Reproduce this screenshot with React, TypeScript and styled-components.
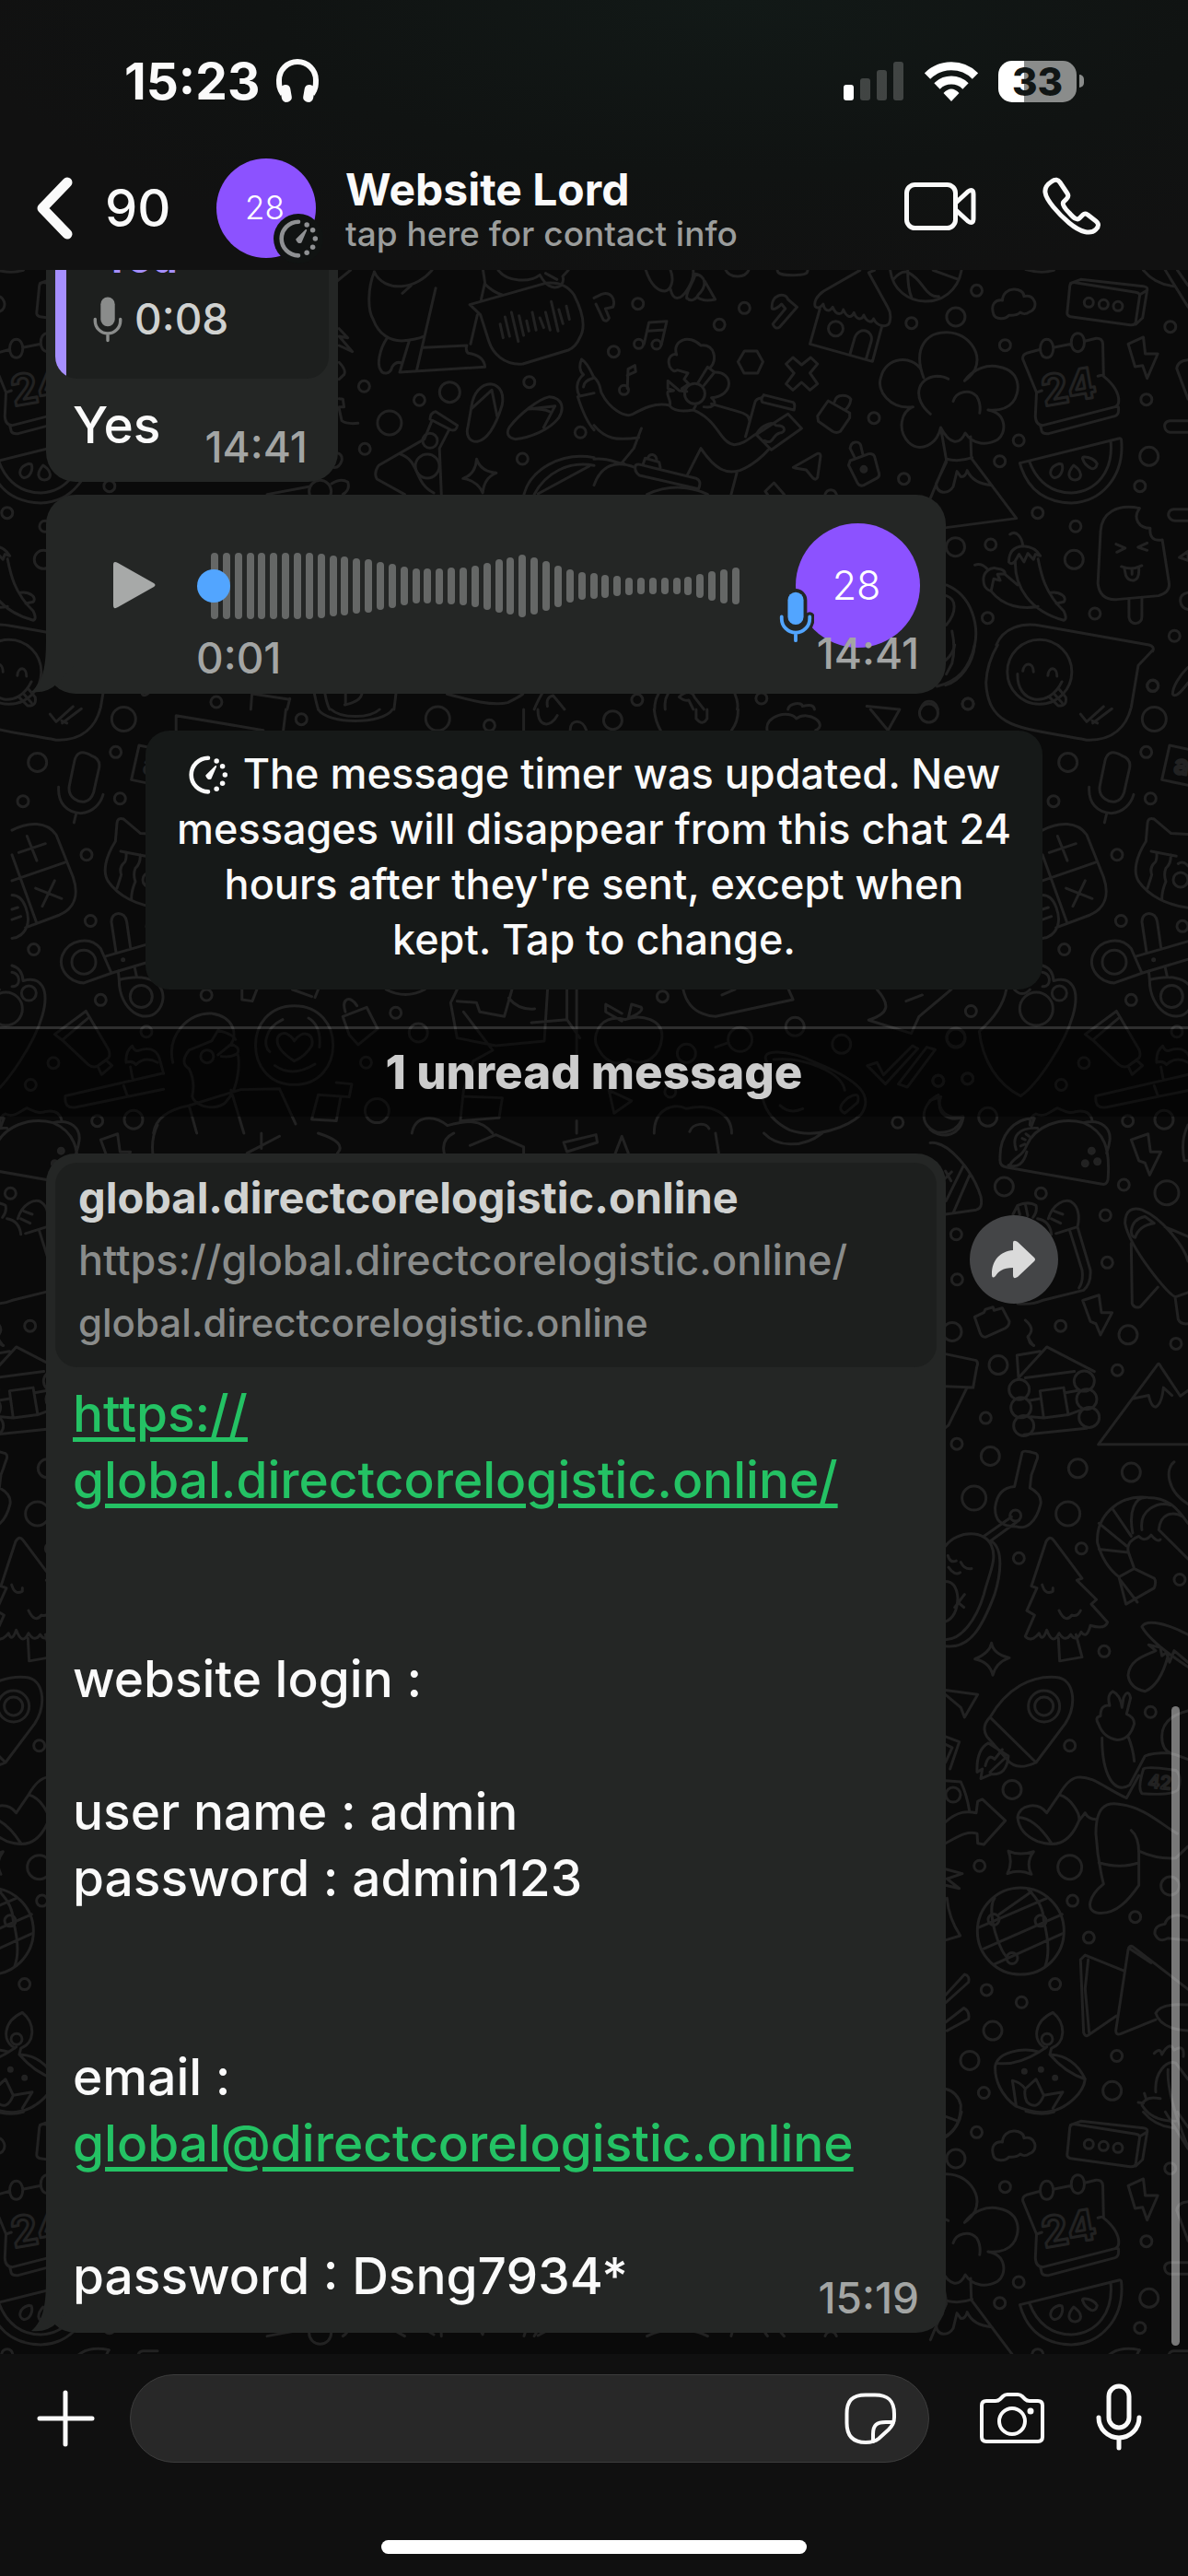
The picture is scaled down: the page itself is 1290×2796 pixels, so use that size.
import styled, { createGlobalStyle } from "styled-components";

const GlobalStyle = createGlobalStyle`
  * {
    box-sizing: border-box;
  }
  body {
    margin: 0;
    background: #0a0a0a;
    color: #fafafa;
    font-family: Inter, "Liberation Sans", sans-serif;
    font-weight: 500;
  }
  button {
    display: flex;
    flex: none;
    padding: 0;
    border: none;
    background: none;
    color: inherit;
    font: inherit;
  }
  svg {
    display: block;
    flex: none;
  }
`;

const Screen = styled.div`
  display: flex;
  flex-direction: column;
  height: 100vh;
`;

/* ---------- header ---------- */

const Header = styled.header`
  flex: none;
  height: 293px;
  background: radial-gradient(ellipse at 62% 0, #121917 0, #101312 45%, #111111 75%);
`;

const StatusBar = styled.div`
  display: flex;
  align-items: center;
  justify-content: space-between;
  height: 172px;
  padding: 4px 113px 0 135px;
`;

const StatusGroup = styled.div<{ $gap: number }>`
  display: flex;
  align-items: center;
  gap: ${(p) => p.$gap}px;
`;

const Clock = styled.span`
  font-size: 55px;
  font-weight: 700;
`;

const Battery = styled.div`
  display: flex;
  align-items: center;
  gap: 3px;

  &::after {
    content: "";
    width: 5px;
    height: 14px;
    border-radius: 0 7px 7px 0;
    background: #8a8c8b;
  }
`;

const BatteryBody = styled.span`
  display: flex;
  align-items: center;
  justify-content: center;
  width: 85px;
  height: 45px;
  border-radius: 15px;
  background: linear-gradient(90deg, #fff 33%, #8a8c8b 33%);
  color: #111615;
  font-size: 42px;
  font-weight: 800;
`;

const NavBar = styled.div`
  display: flex;
  align-items: center;
  height: 108px;
  padding: 0 93px 0 37px;
`;

const BackButton = styled.button`
  align-items: center;
  gap: 33px;
  width: 198px;
  font-size: 56px;
`;

const Contact = styled.button`
  flex: 1;
  align-items: center;
  gap: 32px;
  text-align: left;
`;

const Avatar = styled.span<{ $size: number; $text: number }>`
  position: relative;
  display: flex;
  flex: none;
  align-items: center;
  justify-content: center;
  width: ${(p) => p.$size}px;
  height: ${(p) => p.$size}px;
  padding: 0 3px 2px 0;
  border-radius: 50%;
  background: #8c52ff;
  color: #fff;
  font-size: ${(p) => p.$text}px;
  font-weight: 300;
`;

const TimerBadge = styled.span`
  position: absolute;
  right: -8px;
  bottom: -6px;
  padding: 5px;
  border-radius: 50%;
  background: #101312;
  color: #8f9193;
`;

const ContactText = styled.span`
  display: flex;
  flex-direction: column;
  padding-top: 3px;
`;

const ContactName = styled.span`
  font-size: 48px;
  font-weight: 700;
  line-height: 52px;
`;

const ContactHint = styled.span`
  color: #9b9d9c;
  font-size: 37px;
  line-height: 44px;
`;

const NavActions = styled.div`
  display: flex;
  align-items: center;
  gap: 68px;
  padding-bottom: 4px;
`;

/* ---------- chat ---------- */

const Chat = styled.main`
  position: relative;
  display: flex;
  flex: 1;
  flex-direction: column;
  justify-content: flex-end;
  min-height: 0;
  padding-bottom: 23px;
  overflow: hidden;
`;

const WallpaperSvg = styled.svg`
  position: absolute;
  inset: 0;
  width: 100%;
  height: 100%;
  fill: none;
  stroke: #222222;
  stroke-width: 3;
  stroke-linecap: round;
  stroke-linejoin: round;

  path,
  ellipse {
    vector-effect: non-scaling-stroke;
  }
`;

const ScrollThumb = styled.div`
  position: absolute;
  right: 9px;
  bottom: 9px;
  width: 9px;
  height: 694px;
  border-radius: 5px;
  background: rgba(255, 255, 255, 0.45);
`;

const MessageRow = styled.div<{ $gap: number }>`
  position: relative;
  display: flex;
  flex: none;
  align-items: flex-start;
  gap: 26px;
  margin-top: ${(p) => p.$gap}px;
  padding: 0 141px 0 50px;
`;

const Bubble = styled.article<{ $wide?: boolean }>`
  position: relative;
  flex: ${(p) => (p.$wide ? "1" : "none")};
  padding: 10px;
  border-radius: 32px;
  background: #242625;
`;

const TailSvg = styled.svg`
  position: absolute;
  left: -16px;
  bottom: 0;
`;

const Card = styled.div`
  display: flex;
  overflow: hidden;
  border-radius: 24px;
  background: #1d1f1e;
`;

const QuoteBar = styled.span`
  width: 12px;
  background: #a68fff;
`;

const QuoteText = styled.div`
  display: flex;
  flex-direction: column;
  padding: 4px 27px 31px;
`;

const QuoteAuthor = styled.span`
  padding-left: 12px;
  color: #a68fff;
  font-size: 44px;
  font-weight: 700;
  line-height: 64px;
`;

const QuoteLine = styled.span`
  display: flex;
  align-items: center;
  gap: 11px;
  color: #d0d2d1;
  font-size: 46px;
  line-height: 68px;
`;

const ReplyLine = styled.div`
  display: flex;
  justify-content: space-between;
  gap: 48px;
  padding: 14px 23px 16px 19px;
`;

const ReplyText = styled.span`
  font-size: 55px;
  line-height: 72px;
`;

const Body = styled.p`
  margin: 0;
  padding: 14px 19px 16px;
  font-size: 55px;
  line-height: 72px;
  white-space: pre-line;

  a {
    color: #24c264;
    text-decoration-thickness: 5px;
    text-underline-offset: 6px;
  }
`;

const Time = styled.time`
  color: #a3a5a4;
  font-size: 46px;
  line-height: 48px;
`;

const ReplyTime = styled(Time)`
  align-self: flex-end;
  margin-bottom: -12px;
`;

const CornerTime = styled(Time)<{ $bottom: number }>`
  position: absolute;
  right: 29px;
  bottom: ${(p) => p.$bottom}px;
`;

const Voice = styled.div`
  display: flex;
  height: 196px;
  padding: 21px 18px 0 63px;
`;

const PlayButton = styled.button`
  align-self: flex-start;
  margin-top: 41px;
  color: #a7a9a8;
`;

const Track = styled.div`
  display: flex;
  flex: 1;
  flex-direction: column;
  padding: 32px 61px 0 60px;
`;

const Wave = styled.div`
  position: relative;
  display: flex;
  align-items: center;
  justify-content: space-between;
  height: 72px;
`;

const WaveBar = styled.span`
  width: 8px;
  border-radius: 4px;
  background: #656766;
`;

const Knob = styled.span`
  position: absolute;
  left: -15px;
  width: 36px;
  height: 36px;
  border-radius: 50%;
  background: #52a5ff;
`;

const Elapsed = styled(Time)`
  margin: 18px 0 0 -16px;
`;

const VoiceMic = styled.span`
  position: absolute;
  left: -20px;
  bottom: 4px;
`;

const SideSpace = styled.div`
  flex: none;
  width: 96px;
`;

const SystemNotice = styled.button`
  position: relative;
  display: block;
  margin: 40px 158px;
  padding: 17px 24px 24px;
  border-radius: 26px;
  background: #161918;
  font-size: 45px;
  line-height: 60px;
  text-align: center;

  svg {
    display: inline-block;
    margin-right: 16px;
    vertical-align: -7px;
  }
`;

const UnreadBand = styled.div`
  position: relative;
  flex: none;
  height: 98px;
  border-top: 3px solid rgba(255, 255, 255, 0.15);
  background: rgba(0, 0, 0, 0.5);
  background-clip: padding-box;
  color: #cdcdcd;
  font-size: 51px;
  font-weight: 800;
  line-height: 94px;
  text-align: center;
`;

const Preview = styled(Card)`
  flex-direction: column;
  padding: 4px 25px 14px;
  line-height: 68px;
`;

const PreviewTitle = styled.span`
  color: #d0d2d1;
  font-size: 47px;
  font-weight: 700;
`;

const PreviewText = styled.span<{ $size: number }>`
  color: #8a8c8b;
  font-size: ${(p) => p.$size}px;
`;

const ForwardButton = styled.button`
  align-items: center;
  justify-content: center;
  width: 96px;
  height: 96px;
  margin-top: 67px;
  border-radius: 50%;
  background: #444547;
  color: #dadada;
`;

/* ---------- footer ---------- */

const Footer = styled.footer`
  display: flex;
  flex: none;
  flex-direction: column;
  align-items: center;
  justify-content: space-between;
  height: 241px;
  padding: 22px 0 24px;
  background: #101010;
`;

const Composer = styled.form`
  display: flex;
  align-items: center;
  width: 100%;
  padding: 0 50px 0 39px;
`;

const Field = styled.div`
  display: flex;
  flex: 1;
  align-items: center;
  min-width: 0;
  height: 96px;
  margin: 0 53px 0 37px;
  padding: 0 33px 0 40px;
  border: 1px solid #3c3c3c;
  border-radius: 48px;
  background: #282828;
`;

const FieldInput = styled.input`
  flex: 1;
  min-width: 0;
  border: none;
  outline: none;
  background: none;
  color: #fafafa;
  font: inherit;
  font-size: 55px;
`;

const MicButton = styled.button`
  margin-left: 54px;
  padding-bottom: 4px;
`;

const HomeIndicator = styled.div`
  width: 462px;
  height: 15px;
  border-radius: 8px;
  background: #fff;
`;

/* ---------- icons ---------- */

const line = {
  fill: "none",
  stroke: "currentColor",
  strokeWidth: 5,
  strokeLinecap: "round",
  strokeLinejoin: "round",
} as const;

const HeadphonesIcon = () => (
  <svg width="48" height="48" viewBox="0 0 48 48" fill="currentColor">
    <path d="M8 38C4 32 4 28 4 23a20 20 0 0 1 40 0c0 5 0 9-4 15" fill="none" stroke="currentColor" strokeWidth="6" />
    <rect x="6" y="28" width="11" height="19" rx="5" transform="rotate(-10 11 37)" />
    <rect x="31" y="28" width="11" height="19" rx="5" transform="rotate(10 37 37)" />
  </svg>
);

const SignalIcon = () => (
  <svg width="66" height="44" viewBox="0 0 66 44" fill="#fff">
    <rect x="0" y="26" width="11" height="17" rx="3" />
    <g opacity="0.2">
      <rect x="18" y="19" width="11" height="24" rx="3" />
      <rect x="36" y="10" width="11" height="33" rx="3" />
      <rect x="54" y="1" width="11" height="42" rx="3" />
    </g>
  </svg>
);

const WifiIcon = () => (
  <svg width="58" height="43" viewBox="0 0 58 43" fill="none" stroke="#fff" strokeWidth="9">
    <path d="M3 15.500a37 37 0 0 1 52 0" />
    <path d="M13.500 26.500a22 22 0 0 1 31 0" />
    <path d="M20.500 34q8.500-9 17 0l-8.500 9z" fill="#fff" stroke="none" />
  </svg>
);

const BackIcon = () => (
  <svg width="44" height="72" viewBox="0 0 44 72" {...line} strokeWidth={11}>
    <path d="M36 8L9 36l27 28" />
  </svg>
);

const TimerIcon = ({ size }: { size: number }) => (
  <svg width={size} height={size} viewBox="0 0 48 48" fill="currentColor">
    <path d="M24 4a20 20 0 0 0 0 40" {...line} />
    <circle cx="34" cy="7.500" r="3" />
    <circle cx="41" cy="14" r="3" />
    <circle cx="44" cy="24" r="3" />
    <circle cx="41" cy="34" r="3" />
    <circle cx="34" cy="40.500" r="3" />
    <path d="M22 25L33 14l-6 14q-3 2-5-3z" stroke="currentColor" strokeWidth="2" strokeLinejoin="round" />
  </svg>
);

const VideoIcon = () => (
  <svg width="82" height="56" viewBox="0 0 82 56" {...line}>
    <rect x="4.500" y="4.500" width="53" height="47" rx="9" />
    <path d="M58 24L71 12q6-4 6 3v26q0 7-6 3L58 32" />
  </svg>
);

const PhoneIcon = () => (
  <svg width="67" height="66" viewBox="0 0 67 66" {...line}>
    <path d="M12 6c4-3 7-2 9 1l8 12q2 3-1 6l-3 3c-2 2 0 6 6 12c6 7 9 8 11 6l4-4q2-2 5 0l9 7q5 4 0 9c-6 6-17 3-29-7C19 41 6 26 5 18Q4 11 12 6z" />
  </svg>
);

const MicSolidIcon = ({ color, width, outline }: { color: string; width: number; outline?: string }) => (
  <svg width={width} height={(width * 54) / 36} viewBox="-3 -3 42 63" fill="none" strokeLinecap="round">
    {outline && (
      <>
        <rect x="9" y="1" width="18" height="38" rx="9" fill={outline} stroke={outline} strokeWidth="8" />
        <path d="M2 29v2a16 16 0 0 0 32 0v-2" stroke={outline} strokeWidth="11" />
      </>
    )}
    <rect x="9" y="1" width="18" height="37" rx="9" fill={color} />
    <path d="M2 29v2a16 16 0 0 0 32 0v-2M18 47v9" stroke={color} strokeWidth="4" />
  </svg>
);

const PlayIcon = () => (
  <svg width="46" height="52" viewBox="0 0 46 52" fill="currentColor">
    <path d="M0 4Q0-1 5 2L44 24q3 2 0 4L5 50q-5 3-5-2z" />
  </svg>
);

const ForwardIcon = () => (
  <svg width="48" height="42" viewBox="0 0 48 42" fill="currentColor">
    <path d="M23 3q0-4 5-1l18 17q2 2 0 4L28 40q-5 3-5-2v-8C12 30 7 34 4 39q-4 4-4-2C0 22 9 12 23 11z" />
  </svg>
);

const PlusIcon = () => (
  <svg width="65" height="64" viewBox="0 0 65 64" {...line}>
    <path d="M4 32h57M32 4v56" />
  </svg>
);

const StickerIcon = () => (
  <svg width="59" height="59" viewBox="0 0 59 59" {...line} strokeWidth={4}>
    <path d="M55 28v-4C55 9 48 3.500 34 3.500H24C9 3.500 3.500 10 3.500 24v10C3.500 48 10 55 24 55q9 0 14-4l11-10q6-6 6-13z" />
    <path d="M32 54v-8c0-10 4-13 14-13h8" />
  </svg>
);

const CameraIcon = () => (
  <svg width="74" height="58" viewBox="0 0 74 58" {...line} strokeWidth={4}>
    <path d="M9 10h10q3 0 5-2l3-3q2-2 5-2h11q3 0 5 2l3 3q2 2 5 2h9q5 0 5 5v34q0 5-5 5H9q-5 0-5-5V15q0-5 5-5z" />
    <circle cx="37" cy="32" r="14" />
    <circle cx="57" cy="21" r="3.500" fill="currentColor" stroke="none" />
  </svg>
);

const MicIcon = () => (
  <svg width="50" height="74" viewBox="0 0 50 74" {...line}>
    <rect x="14" y="4" width="22" height="45" rx="11" />
    <path d="M3 38a22 22 0 0 0 44 0M25 61v10" />
  </svg>
);

const Tail = () => (
  <TailSvg width="46" height="60" viewBox="0 0 46 60" fill="#242625">
    <path d="M16 0C16 28 14 46 0 58q17 2 28-9l18-19V0z" />
  </TailSvg>
);

/* ---------- wallpaper ---------- */

type Dot = [number, number, number];

interface Sketch {
  x: number;
  y: number;
  sx: number;
  sy: number;
  d: string;
  small: number[][];
  rings: Dot[];
  solid?: Dot[];
}

// Each sketch keeps its own drawing grid; x, y, sx, sy map it onto the wallpaper.
const sketches: Sketch[] = [
  {
    x: 0,
    y: 270,
    sx: 0.4114,
    sy: 0.3333,
    d:
      "M988 75C970 130 970 200 985 230C1000 280 1030 300 1060 300Q1095 298 1120 285M988 75C1000 110 1030 125 1060 122C1090 120 1120 100 1140 70M1062 145L1085 120M1150 128L1100 395M1080 300L1055 402L1280 385C1278 360 1265 345 1235 340Q1228 330 1232 315L1118 322M1022 290C1000 330 995 380 1005 395C1010 410 1030 410 1035 385Q1045 365 1060 372M1242 310L1260 215M1270 165L1280 110L1275 70M1280 115Q1300 140 1325 150M890 105L925 70" +
      "M1240 182L1440 112Q1490 105 1515 150C1540 210 1545 260 1530 290Q1520 320 1500 330L1380 375C1330 380 1300 340 1290 300L1268 215ZM1320 245L1328 290M1333 222L1345 285M1350 207L1368 302M1370 218L1382 282M1390 235L1396 268M1405 207L1415 265M1425 225L1435 257M1440 207L1452 265M1455 172L1473 268M1475 198L1486 244M1495 187L1503 230" +
      "M1315 70C1340 110 1400 110 1425 85C1440 120 1460 135 1480 120Q1490 105 1485 90L1500 70M1440 80L1470 100M895 260L918 290L895 285L930 335L895 315M895 370Q915 395 908 410L895 425M895 488L905 490L908 515H895M895 520L902 560Q915 572 945 568M890 665Q905 670 902 690Q895 715 880 712" +
      "M1245 510C1250 470 1270 440 1295 440C1325 445 1330 480 1325 510C1310 570 1290 620 1260 628C1235 630 1230 600 1235 580ZM1245 520L1298 460L1312 545M1345 580C1370 540 1420 490 1450 482C1485 485 1490 520 1475 550C1450 590 1400 615 1360 620C1340 615 1335 600 1345 580M1395 522L1465 512L1435 582M1395 522Q1430 520 1450 530" +
      "M1150 530Q1135 535 1135 555L1190 590Q1205 595 1207 575ZM1140 560L1120 620L1000 705Q985 730 995 750L1068 800M1185 590L1160 650L1165 800M1055 668C1110 690 1090 760 1145 795M1258 685Q1268 725 1310 730Q1278 745 1274 795Q1260 755 1222 748Q1255 735 1258 685Z" +
      "M1383 800C1400 720 1480 660 1568 680M1410 800C1440 730 1500 690 1568 706M1420 798L1555 708M1535 360C1550 370 1560 400 1568 420M1535 360C1528 380 1530 400 1540 410C1520 430 1520 460 1530 480L1568 470M1568 420Q1540 430 1540 450M1525 482Q1545 560 1568 590M705 800L815 775M875 765Q900 745 918 760Q925 785 905 800" +
      "M665 1450L662 1500M765 1465L758 1500M670 1450L765 1468M830 1450Q835 1480 840 1500M858 1450Q862 1480 870 1500M912 1485V1450M1045 1450L1040 1500M910 1485Q950 1475 955 1450M1180 1450C1240 1470 1300 1490 1340 1478Q1370 1460 1380 1450M1410 1500Q1420 1470 1430 1450M1445 1490Q1440 1460 1460 1455L1490 1500",
    small: [[961, 448], [1107, 493], [1397, 434], [963, 652], [1379, 684], [1532, 598], [571, 1476]],
    rings: [[1187, 467, 11], [1028, 567, 13], [1135, 625, 8], [1128, 708, 13], [845, 790, 12]],
  },
  {
    x: 645,
    y: 270,
    sx: 0.4114,
    sy: 0.3333,
    d:
      "M137 70C150 120 170 138 187 138C205 134 212 100 202 70M262 70C265 110 235 160 222 160C212 162 205 150 202 132M245 160C255 175 270 165 275 150C300 120 295 90 268 82C262 110 240 145 245 162M292 105L320 165C300 170 285 170 272 158M348 70C358 95 398 98 408 70M484 70C484 84 500 86 525 86C555 86 565 82 564 68" +
      "M702 70L606 138C586 155 580 175 584 188C590 196 600 190 605 180C608 200 620 210 630 190C640 220 655 215 658 198C668 226 680 226 686 208C694 236 708 230 712 216C722 244 735 240 738 228C748 256 775 256 780 240C786 215 780 200 775 190L725 78L740 70M596 196L570 310L735 367L760 252M676 342L688 290C700 250 738 266 732 300L718 360" +
      "M782 70C795 200 950 210 970 70M828 70Q828 130 838 158M790 100Q810 70 828 76Q850 90 870 125Q890 160 910 155M895 70L962 100M1055 215C1045 180 1060 165 1078 168C1080 120 1135 125 1135 155C1165 145 1175 195 1150 205C1140 215 1130 212 1125 207C1115 220 1105 215 1095 217C1085 232 1060 230 1055 215Z" +
      "M1256 120Q1258 108 1270 110L1430 142Q1443 145 1440 155L1430 238Q1428 250 1415 248L1262 222Q1248 220 1249 208ZM1258 112L1285 100L1450 122Q1462 124 1460 135L1448 225L1430 246M1440 150L1460 135M1450 70Q1480 115 1530 122M1508 70L1568 190M1540 70L1568 120M1140 68Q1180 82 1214 70" +
      "M132 310L145 240L192 236L178 312M142 268L186 264M88 455L90 392L108 380L110 400L88 412M470 195C465 150 505 138 512 165L536 190L490 255Q478 265 472 245L505 195L495 180C488 190 475 200 470 195ZM0 160L20 148C45 138 58 165 50 190L30 195L40 225Q35 240 25 232L5 180M380 368L397 333L430 333L446 368L432 405L396 405Z" +
      "M507 375L525 354L548 378L572 354L590 375L570 405L590 440L570 460L548 435L525 460L507 440L528 405ZM200 385C190 350 210 340 218 345C205 300 250 275 282 315C320 310 325 365 308 385M200 385Q210 405 220 395L248 405L238 425L250 440L232 455L245 465L225 462L195 430V455L210 462L195 465C190 480 205 490 200 512Q215 535 262 525L268 512M275 435L300 385L318 402L290 445M318 402C370 400 370 480 310 485C330 505 310 520 290 515" +
      "M0 418C20 440 15 460 20 470C40 520 80 550 100 540C130 520 160 500 200 510M262 525C330 560 330 630 370 638C400 635 410 615 432 600M310 505L380 530Q412 540 410 560M0 575C30 620 60 625 118 615M125 585L105 650L75 695M245 740L282 650C320 720 350 735 385 722C420 705 450 670 460 655M378 725L362 800M400 612L425 500Q428 488 440 486M448 476L525 500Q532 505 528 525L445 500Q438 490 448 476M428 605L512 538L548 585L468 655ZM428 605C440 575 470 560 480 575C510 575 505 600 490 600C470 605 475 640 450 625" +
      "M0 685C40 680 60 700 80 700M0 770C20 700 60 690 108 712M110 705Q115 700 125 704L270 748Q285 755 276 782L120 738Q105 725 110 705M130 700L135 682L172 695L175 712M142 682C145 665 165 665 166 692M140 800C200 765 260 775 300 800M458 800L452 790L475 762L502 800M610 800C615 780 635 780 640 800" +
      "M590 545L618 495L675 535L675 550L650 595Q640 602 630 595L592 562ZM635 498C640 470 670 475 678 490Q675 515 662 525M526 712L590 667Q598 665 598 675L590 745Q585 755 578 747L560 720L530 714ZM676 690L725 668Q735 665 740 675L752 730Q755 742 745 748L712 770Q700 775 695 762L672 705ZM688 680L676 650C678 625 700 625 704 640L710 672" +
      "M870 420C840 320 880 270 932 272C990 275 1025 340 1005 395Q995 415 978 430C1000 390 1040 375 1070 385C1130 400 1125 470 1105 500Q1085 530 1040 525C1090 535 1090 600 1065 622C1040 640 1000 640 980 600C965 640 940 640 915 582C905 640 860 665 830 630C800 590 810 530 842 515C780 525 745 460 757 420C770 350 840 345 864 395M888 538C840 490 850 420 905 415Q925 416 935 424M948 497C955 465 990 455 1010 480Q1022 505 1018 535M915 582L930 688L888 812M994 612L996 682L1115 878L930 908M930 685Q965 695 998 680M930 695L903 765C905 800 935 800 948 775L958 725L968 742Q980 745 985 722Q1000 765 1050 770" +
      "M1178 328L1142 340Q1130 345 1132 360L1168 468L1165 545Q1166 575 1185 575L1375 515Q1385 510 1385 495C1385 460 1360 430 1345 415L1343 310Q1342 290 1325 292L1298 300M1212 322L1260 310M1178 575L1182 595Q1186 604 1200 602L1375 545Q1387 540 1384 515M1168 468L1182 462M1330 415L1345 410M1195 295C1172 295 1172 355 1195 355C1218 355 1218 295 1195 295M1277 275C1254 275 1254 335 1277 335C1300 335 1300 275 1277 275M1410 310L1450 288L1455 342L1488 342L1460 422L1448 380L1428 384Z" +
      "M1124 698L1385 618Q1392 616 1392 625C1400 740 1340 825 1260 828C1180 825 1140 770 1124 698M1150 695C1170 760 1210 795 1260 795C1330 790 1370 720 1364 630M1228 700C1200 710 1200 740 1215 746C1232 745 1240 720 1235 702ZM1266 705C1245 735 1255 752 1270 753C1290 750 1290 725 1266 705ZM1290 685C1285 670 1320 680 1328 700Q1325 720 1312 715Q1295 705 1290 685ZM1568 560H1520Q1506 562 1506 578Q1508 596 1520 598H1568M1568 848H1530Q1516 850 1516 868Q1520 885 1535 886H1568M1568 362Q1540 365 1538 390L1568 490" +
      "M1440 845C1380 830 1340 860 1337 920L1330 1090Q1335 1145 1380 1142L1490 1130Q1520 1120 1518 1090L1500 948Q1465 955 1468 910C1440 910 1420 880 1440 845M1412 1142V1200Q1415 1220 1430 1220Q1446 1218 1446 1198V1135M1378 962L1402 975L1380 988M1460 958L1436 972L1460 982M1392 1035Q1420 1048 1446 1032M1400 1042L1404 1065Q1410 1082 1425 1080Q1440 1075 1438 1040M1420 1042V1060" +
      "M1098 930C1115 915 1130 940 1132 968M1095 1020C1095 985 1110 970 1132 968C1160 970 1170 985 1178 1000L1165 995L1160 1012L1145 992L1135 1020L1122 995L1110 1020Q1100 1030 1095 1020M1112 1020C1110 1100 1150 1180 1240 1210Q1250 1205 1240 1180C1190 1120 1180 1060 1172 1010M1005 1030C1025 1020 1035 1040 1040 1045M1030 1095C1020 1050 1050 1035 1065 1042Q1085 1045 1085 1058L1065 1060L1072 1080L1055 1075L1048 1115Q1035 1110 1030 1095M1048 1115C1080 1165 1130 1175 1172 1165M1085 1060L1118 1095M1205 1120C1230 1115 1250 1135 1240 1150L1220 1155" +
      "M930 1095C1000 1130 1015 1230 1005 1290C990 1370 960 1410 905 1425M930 1130C955 1140 960 1180 930 1225M945 1245Q955 1300 945 1350L930 1385M1062 1290C1080 1235 1130 1215 1180 1228L1465 1290Q1480 1295 1475 1310M1118 1385C1115 1480 1200 1500 1235 1410M1132 1375C1135 1345 1160 1345 1160 1378M1198 1390C1200 1360 1222 1360 1222 1392M1202 1460L1225 1488Q1250 1490 1245 1460L1228 1435M1215 1450L1235 1478" +
      "M1545 1005L1568 985V1015ZM1568 1120Q1545 1125 1548 1150Q1550 1170 1568 1175M160 1500Q160 1470 170 1450M188 1500Q185 1470 195 1450M225 1460C240 1440 260 1440 265 1460L290 1500M225 1460Q240 1475 250 1470L262 1500M372 1450Q382 1480 378 1500M512 1500C515 1478 550 1475 550 1490Q580 1480 582 1500M720 1490L805 1500M862 1500C870 1465 900 1465 908 1500",
    small: [[116, 179], [331, 247], [397, 193], [52, 335], [838, 242], [1010, 136], [1085, 314], [1521, 254], [1458, 491], [1121, 624], [1071, 692], [1441, 773], [739, 551], [818, 749], [1171, 860], [1271, 904], [1047, 963], [1039, 1202], [1322, 1188], [1532, 1261], [1475, 1422], [114, 1469], [442, 1464], [987, 1482]],
    rings: [[955, 222, 10], [1465, 676, 10], [954, 971, 10], [1267, 1012, 10], [638, 260, 8], [266, 472, 11], [118, 310, 5], [165, 312, 5], [79, 460, 5], [1306, 175, 5], [1345, 181, 5], [1383, 187, 5], [1176, 1378, 35]],
    solid: [[712, 718, 3]],
  },
  {
    x: 100,
    y: 770,
    sx: 0.7015,
    sy: 0.3333,
    d:
      "M130 70V20L265 68M300 0L296 68M350 0C365 50 450 50 465 0M370 0C385 30 430 30 445 0M668 0V68M690 0C690 60 710 60 720 20M740 68C740 30 760 30 765 68M870 0Q872 40 880 68M935 0V30Q945 55 952 30V0M1000 0Q1000 40 990 68M1045 68C1040 20 1080 0 1090 30C1110 0 1140 50 1120 68M1205 0L1232 68L1250 0" +
      "M125 1150C115 1060 150 985 185 990C220 1000 225 1060 215 1090M150 1110L185 1080L195 1045Q220 1060 222 1075M150 1110Q135 1150 150 1170Q160 1210 155 1260C160 1300 200 1310 210 1270C225 1240 230 1150 225 1120M195 1125L215 1090Q230 1100 225 1120Q215 1135 200 1130M313 965C233 965 233 1222 313 1222C393 1222 393 965 313 965" +
      "M313 1145C275 1095 285 1050 300 1055Q310 1065 313 1080C325 1040 345 1055 340 1095Q330 1130 313 1145M295 1010C265 1040 265 1100 275 1115M335 1005Q355 1030 352 1100M283 1160Q310 1200 345 1155M388 1000L425 970L442 1040L412 1092L398 1060ZM392 985C385 940 400 930 410 965" +
      "M232 912V945L248 950L255 912M345 938L350 912M340 935L310 912M455 912Q485 945 515 912M565 912L555 955L565 1070L625 1095L700 1080L705 912M565 950L595 955L600 985L638 1000L650 912M575 985L620 1110L590 1145L575 1240L570 1340M680 1020L735 1010L755 1070M735 912V1010M750 912V1200M645 940Q660 980 685 975" +
      "M825 1010C790 990 775 1050 780 1090C790 1140 810 1170 830 1140C860 1170 880 1120 882 1070C885 1010 850 990 825 1010M820 1015L795 985V960L820 990M830 1005L835 960L850 970Q855 985 830 1005M915 912C920 960 935 995 965 1000L1085 945L1078 912M975 930L995 912M1215 912C1235 960 1235 990 1202 1012L1268 1055L1280 1000L1330 912M1260 950L1285 930" +
      "M965 1100L985 1085M1045 1150C1030 1100 1080 1110 1120 1150C1190 1210 1210 1260 1190 1320C1170 1360 1120 1400 1080 1370C1030 1320 1030 1220 1045 1150M1055 1140C1100 1130 1160 1180 1165 1240M1170 1265Q1190 1240 1185 1280L1165 1315Q1150 1300 1170 1265M1065 1290Q1080 1320 1100 1300M1200 1160L1215 1150L1225 1190L1270 1095L1278 1105L1228 1220ZM1248 1220L1292 1100L1305 1108L1262 1230Z" +
      "M95 1380Q100 1310 150 1290L230 1238L290 1235L315 1350M150 1290L162 1380M215 1240L235 1380M350 1255L385 1260L378 1340L340 1335ZM378 1215L402 1220L398 1262L385 1260M495 1380C500 1320 530 1320 550 1355C580 1340 600 1330 620 1380M575 1260L635 1265L630 1330L570 1340M870 1380C870 1300 900 1280 920 1300C960 1280 990 1320 990 1380M925 1375C930 1345 950 1345 955 1365M750 1380V1340M808 1315L800 1240L835 1275Z" +
      "M1310 1255C1280 1290 1280 1360 1310 1378Q1340 1380 1348 1325Q1310 1340 1310 1255ZM262 1380V1430M240 1445L290 1390M380 1445Q395 1410 350 1380M545 1445Q540 1400 560 1380M585 1420L625 1385L668 1425V1445M730 1410L780 1385L782 1410L735 1440ZM810 1445L820 1390L830 1445M965 1380L970 1445M1040 1380C1060 1425 1100 1430 1130 1380",
    small: [[324, 32], [615, 52], [177, 930], [470, 988], [883, 935], [424, 1150], [1310, 1210], [1355, 1203], [1247, 1345], [895, 1245]],
    rings: [[535, 30, 13], [806, 35, 10], [1295, 12, 10], [178, 1130, 7], [1003, 1075, 13], [505, 1053, 10], [1088, 1033, 10], [1337, 1068, 10], [441, 1307, 13], [1160, 1090, 10], [920, 1120, 10]],
  },
  {
    x: 1010,
    y: 700,
    sx: 0.3333,
    sy: 0.4847,
    d:
      "M220 0Q185 40 182 85C190 190 300 185 510 213C600 215 640 180 655 140L678 46L725 12M490 155L510 172L565 138M530 175L592 143M528 170L545 175M50 90C100 80 140 40 145 0M50 35Q75 20 80 0" +
      "M568 265C575 235 600 238 625 248Q655 255 650 275L632 330C620 355 590 355 570 345Q548 335 553 315ZM518 318C515 355 545 375 590 377C630 375 655 355 663 335M575 378L568 398M840 50C810 70 790 95 790 110Q800 122 840 85M900 242L780 225L755 302L880 320" +
      "M366 415C420 395 480 395 510 425L565 520C585 560 570 590 520 605L410 633M366 528L538 487M366 470L445 620M388 465L475 445M415 428L447 483M443 545L528 568M505 528L465 585M366 560C410 560 425 610 415 630Q400 655 366 657M366 592L385 588M366 615L395 608" +
      "M860 425L785 422L730 390Q710 385 708 400L703 440C670 475 660 510 680 530C710 560 770 585 860 590M720 462L802 473M738 466Q740 485 728 490Q715 500 722 515Q715 530 708 545M784 470Q785 490 768 500Q760 515 768 530Q755 550 755 570M808 490Q825 482 840 495" +
      "M690 735L600 757C550 755 515 725 530 695C550 660 620 650 655 680ZM672 697L860 660M690 735L860 700M705 688L690 620C690 595 735 595 740 620L752 678M715 750L712 730M772 742L765 720M715 750C860 725 880 790 840 820C800 850 715 820 715 750" +
      "M248 772Q235 820 160 865C170 930 220 985 295 1010C350 985 440 890 465 830C490 770 460 740 402 752Q400 725 366 718M366 765Q390 765 388 748Q385 735 366 733M275 772Q300 790 325 772M505 872L607 820L680 905Q688 918 680 925L645 943Q630 948 615 940L530 885ZM530 885L612 837M645 943L673 930L692 942L658 962Z" +
      "M540 1010L860 959M860 995L575 1035Q535 1040 540 1010M730 987L742 1010M738 935Q735 910 758 898Q765 912 780 908Q840 895 850 935L860 960M738 935Q760 930 770 940Q800 920 840 935M752 945L760 975M0 1085C30 1105 95 1105 108 1058Q70 1065 50 1055Q20 1040 35 1012L0 1020" +
      "M228 1150C225 1100 270 1060 340 1060L330 1078M228 1150Q225 1168 250 1170L565 1208Q580 1208 580 1190C585 1130 570 1090 500 1070C420 1055 340 1080 315 1120C300 1150 270 1145 258 1168M255 1165Q300 1175 315 1135M325 1075Q325 1055 345 1050C370 1060 390 1045 415 1037C440 1045 455 1050 475 1045Q520 1040 528 1065M280 1130C265 1100 290 1080 350 1082M500 1070C560 1060 590 1085 585 1110Q582 1125 575 1138M300 1105L310 1108M312 1095L322 1100M295 1122L308 1118" +
      "M0 1115C60 1110 140 1180 165 1235C170 1255 165 1262 150 1265L50 1275M108 1167L52 1245M128 1188L75 1272M50 1178L68 1200M48 1195L70 1180M655 1108L710 1095L718 1135L752 1135L715 1187L700 1160L680 1155ZM497 1468L550 1456L558 1495L593 1495L555 1545L540 1520L522 1515Z" +
      "M385 1285C400 1250 440 1240 460 1247C490 1260 485 1290 480 1303L410 1318M270 1275L285 1255Q320 1245 345 1255Q350 1270 335 1282M285 1258L292 1275M310 1252L318 1278M405 1268L432 1275M395 1285L425 1295M480 1303L522 1400Q525 1430 500 1445L365 1468Q330 1478 285 1475M455 1312L495 1400Q500 1425 485 1440M350 1285Q390 1290 395 1320" +
      "M635 1295C635 1265 660 1258 690 1265C760 1285 830 1350 840 1380M635 1295C650 1350 780 1460 800 1460L840 1450M655 1340L658 1475Q665 1487 685 1482L742 1438M655 1312Q660 1285 700 1280L730 1295Q680 1300 668 1327Q655 1325 655 1312M765 1303L840 1325M798 1460L808 1510Q815 1522 840 1520M145 1505L175 1495L180 1488L205 1483L208 1490L235 1485L258 1515Q258 1525 245 1530L180 1550Q165 1550 160 1535ZM310 1512C340 1530 330 1540 318 1550L335 1568M840 1075Q815 1110 828 1155H840",
    small: [[123, 132], [725, 92], [704, 240], [718, 344], [402, 350], [609, 470], [622, 618], [822, 630], [437, 682], [655, 795], [804, 866], [133, 820], [501, 936], [427, 985], [122, 971], [26, 976], [644, 1066], [631, 1209], [361, 1228], [571, 1277], [85, 1320], [577, 1383], [88, 1421], [425, 1525]],
    rings: [[730, 166, 13], [449, 263, 10], [84, 881, 10], [188, 1057, 10], [762, 1063, 10], [241, 1213, 10], [771, 1227, 13], [72, 1538, 10], [645, 1545, 10], [816, 526, 8], [600, 710, 13], [787, 787, 12], [346, 815, 18], [421, 780, 8]],
    solid: [[526, 1133, 3], [545, 1157, 3], [505, 1161, 3], [728, 705, 1]],
  },
  {
    x: 960,
    y: 1450,
    sx: 0.3333,
    sy: 0.7015,
    d:
      "M200 28L300 38Q308 42 302 48L290 80L200 78M268 82L210 138L200 142M438 65L530 17L685 55M438 65L433 30L508 24M460 65L620 55M470 100L510 97M590 88L635 84M478 125L520 127M600 122L640 115M508 85L585 80L600 122L520 127ZM455 153L660 143M470 0Q470 12 488 15" +
      "M698 168L890 45Q895 40 902 48L965 93L1010 78M698 168H1010M812 97L862 92Q870 110 885 110Q905 105 910 80L938 92M425 233L450 180Q455 176 495 182Q505 185 495 195L488 205L480 215L475 235Q515 245 510 260C495 290 460 300 430 295C380 295 360 285 362 265Q370 235 425 233M325 310L415 280M345 318L440 285" +
      "M200 325C240 300 330 300 350 325C370 345 340 370 325 400C300 440 250 470 200 470M350 318C390 330 380 370 360 400C320 450 280 485 200 480M208 340Q215 352 235 348M210 358Q230 372 248 366M250 350Q262 362 285 360M200 380Q235 380 240 405Q238 435 200 442M230 420L262 400M240 412L260 420" +
      "M480 387L528 318Q540 308 552 316L645 375L628 378L692 408L675 415L728 443Q720 455 672 448Q660 470 642 458Q625 475 608 462Q590 475 570 460Q550 480 530 455Q515 475 505 460Q480 475 460 465L490 432L465 425L498 390ZM515 385Q525 402 550 395V390M570 425Q590 445 612 432Q630 435 640 425M568 468L572 503L645 497L625 462" +
      "M695 320C690 280 760 245 860 250C930 250 960 270 990 290M695 320Q715 355 765 373L815 360L800 340Q780 320 830 310Q850 320 870 308Q890 320 900 315M765 373L788 415L880 390Q888 380 880 375L815 360M700 330L795 335M700 290L790 325M745 268L805 310M810 305C795 270 820 250 850 250M840 300C830 270 890 255 935 262M895 300C900 275 940 270 975 280M770 378L825 412M895 300L990 345M945 195C915 205 920 240 990 260" +
      "M350 475Q355 492 408 498Q365 505 354 525Q345 505 296 500Q345 490 350 475ZM200 548L305 555L262 590L250 575L200 555M345 590C400 545 480 525 560 528C620 530 630 570 590 600L495 660C450 670 420 668 400 655L335 620Q315 605 345 590ZM345 590L495 660M405 650Q400 680 350 678L315 685L320 670L303 675Q300 640 340 630L405 650M330 665Q340 645 360 655L385 640M345 675L390 655" +
      "M200 620L245 628L215 670M200 632L222 637L200 660M200 688L250 690Q270 710 278 735M200 752C240 735 270 735 300 738L305 720L320 717L395 750L325 787L305 785L303 770C270 765 240 775 200 785M698 600Q685 590 705 588Q705 570 735 572Q725 555 745 550Q770 555 775 575L780 560Q795 545 803 560L790 585Q815 590 815 600Q800 625 760 625Q715 622 698 600M710 622C710 680 750 710 800 695L850 650Q870 645 930 645M795 620Q812 640 815 658" +
      "M435 745C440 725 500 720 530 738L570 710Q600 685 630 683C680 680 720 700 790 715L830 680M570 710C610 715 640 740 635 750C600 790 550 790 500 782Q440 770 435 745Q490 745 545 785M635 750L655 738Q665 748 690 748M690 770C690 730 720 720 770 725C850 730 900 755 955 770M690 770Q695 810 715 848C670 865 650 890 700 893C760 895 800 870 830 850V800Q830 775 805 765M700 815Q770 825 830 815M830 797Q890 810 950 808L990 790M990 580Q905 590 905 620Q905 645 950 648L990 655" +
      "M845 670Q855 665 950 672Q970 680 960 700Q950 712 840 708Q825 700 845 670M405 797Q440 805 487 798Q460 815 480 833Q440 825 402 832Q420 815 405 797ZM360 870C330 890 380 960 405 962M375 895L480 860M310 915L530 870M325 948L580 895M360 972L580 925M470 857Q520 880 520 905Q545 950 525 975" +
      "M640 965L655 958L780 982M640 965L650 1078Q655 1085 665 1082L757 1052M665 965L655 1010L668 1078M755 1075L795 950Q798 942 810 945L1010 1018M755 1075Q755 1082 770 1080L885 1058M800 948L870 970M885 1048Q900 1032 990 1035M885 1048Q900 1072 990 1075" +
      "M525 1102C480 1090 490 1060 550 1047C595 1065 590 1095 545 1102L540 1112Q590 1140 655 1150C650 1170 600 1195 540 1200Q500 1205 430 1192C380 1175 360 1150 362 1130C370 1108 450 1100 505 1108L530 1100M365 1125Q430 1130 505 1108M545 1112Q620 1115 655 1150M430 1190L418 1152Q445 1155 460 1165L495 1150L520 1175L582 1170L550 1195M520 1175Q500 1200 465 1185Q455 1175 460 1165" +
      "M880 1110Q900 1100 905 1112Q930 1090 945 1105Q980 1095 975 1115M885 1170C880 1140 920 1120 950 1125L990 1150M925 1135C920 1170 960 1220 990 1255M840 1190Q850 1175 900 1180M840 1190Q870 1215 950 1215M828 1186L845 1187M848 1172L855 1182M200 1020L262 988Q280 990 275 1000L200 1032M200 1062L260 1040Q280 1045 275 1057L205 1075M200 1165Q240 1170 250 1190Q250 1225 200 1238M200 825L255 832L205 840L245 855L200 850M205 870Q210 900 248 928L200 935" +
      "M840 450C850 440 900 440 990 462M840 450Q870 475 990 512M795 525C800 500 850 495 885 487L862 478L900 482L905 495L920 490L930 505L945 487L990 505M795 525Q800 545 850 550Q900 540 925 495M990 900Q960 895 945 897Q920 900 915 910Q880 912 882 925Q895 940 925 932L990 935",
    small: [[760, 53], [951, 12], [331, 127], [237, 167], [643, 329], [439, 344], [963, 377], [717, 488], [868, 582], [605, 634], [311, 820], [614, 874], [667, 931], [818, 899], [334, 1012], [557, 1003], [448, 1031], [758, 1114], [325, 1171]],
    rings: [[372, 45, 10], [346, 186, 10], [805, 211, 10], [631, 205, 10], [293, 251, 13], [599, 275, 13], [417, 702, 10], [605, 822, 13], [354, 1075, 10], [279, 1121, 10], [743, 1168, 10], [932, 851, 10], [440, 83, 11], [446, 111, 11], [455, 139, 11], [652, 70, 11], [660, 98, 11], [668, 126, 11], [428, 278, 6], [521, 573, 17], [521, 573, 10], [225, 710, 8], [445, 921, 47], [357, 903, 6], [510, 905, 6], [417, 963, 6], [531, 1088, 6]],
    solid: [[457, 1138, 2], [511, 1135, 2], [557, 1148, 2]],
  },
];

const TILE_W = 1119;
const TILE_H = 1999;

const Wallpaper = () => (
  <WallpaperSvg aria-hidden="true">
    <g transform="translate(0 -293)">
      <g id="tile">
        {sketches.map((s, i) => (
          <g key={i} transform={`translate(${s.x} ${s.y}) scale(${s.sx} ${s.sy})`}>
            <path d={s.d} />
            {s.small.map(([x, y]) => (
              <ellipse key={`${x}-${y}`} cx={x} cy={y} rx={6 / s.sx} ry={6 / s.sy} />
            ))}
            {s.rings.map(([x, y, r]) => (
              <ellipse key={`${x}-${y}-${r}`} cx={x} cy={y} rx={r / s.sx} ry={r / s.sy} />
            ))}
            {(s.solid || []).map(([x, y, r]) => (
              <ellipse key={`${x}-${y}`} cx={x} cy={y} rx={r / s.sx} ry={r / s.sy} fill="#222222" />
            ))}
          </g>
        ))}
        <text x="1134" y="441" fontSize="46" fontWeight="700" transform="rotate(-10 1134 441)">
          24
        </text>
        <text x="1274" y="839" fontSize="28" transform="rotate(8 1274 839)">
          a
        </text>
        <text x="1246" y="1940" fontSize="20" strokeWidth="2" transform="rotate(6 1246 1940)">
          42
        </text>
      </g>
      <use href="#tile" x={-TILE_W} />
      <use href="#tile" y={TILE_H} />
      <use href="#tile" x={-TILE_W} y={TILE_H} />
    </g>
  </WallpaperSvg>
);

/* ---------- page ---------- */

const waveform = [
  72, 72, 72, 72, 72, 72, 72, 72, 72, 70, 66, 64, 60, 58, 52, 48, 42, 38, 38, 39, 40, 41, 45, 51, 58, 62, 68, 62, 54,
  45, 36, 30, 28, 25, 22, 19, 18, 18, 18, 18, 20, 26, 32, 37, 40,
];

export default function App() {
  return (
    <>
      <GlobalStyle />
      <Screen>
        <Header>
          <StatusBar>
            <StatusGroup $gap={17}>
              <Clock>15:23</Clock>
              <HeadphonesIcon />
            </StatusGroup>
            <StatusGroup $gap={22}>
              <SignalIcon />
              <WifiIcon />
              <Battery>
                <BatteryBody>33</BatteryBody>
              </Battery>
            </StatusGroup>
          </StatusBar>
          <NavBar>
            <BackButton type="button" aria-label="Back, 90 unread chats">
              <BackIcon />
              90
            </BackButton>
            <Contact type="button">
              <Avatar $size={108} $text={35}>
                28
                <TimerBadge>
                  <TimerIcon size={44} />
                </TimerBadge>
              </Avatar>
              <ContactText>
                <ContactName>Website Lord</ContactName>
                <ContactHint>tap here for contact info</ContactHint>
              </ContactText>
            </Contact>
            <NavActions>
              <button type="button" aria-label="Video call">
                <VideoIcon />
              </button>
              <button type="button" aria-label="Voice call">
                <PhoneIcon />
              </button>
            </NavActions>
          </NavBar>
        </Header>

        <Chat>
          <Wallpaper />

          <MessageRow $gap={0}>
            <Bubble>
              <Card>
                <QuoteBar />
                <QuoteText>
                  <QuoteAuthor>You</QuoteAuthor>
                  <QuoteLine>
                    <MicSolidIcon color="#8a8c8b" width={36} />
                    0:08
                  </QuoteLine>
                </QuoteText>
              </Card>
              <ReplyLine>
                <ReplyText>Yes</ReplyText>
                <ReplyTime>14:41</ReplyTime>
              </ReplyLine>
            </Bubble>
          </MessageRow>

          <MessageRow $gap={14}>
            <Bubble $wide>
              <Tail />
              <Voice>
                <PlayButton type="button" aria-label="Play">
                  <PlayIcon />
                </PlayButton>
                <Track>
                  <Wave>
                    {waveform.map((height, i) => (
                      <WaveBar key={i} style={{ height }} />
                    ))}
                    <Knob />
                  </Wave>
                  <Elapsed>0:01</Elapsed>
                </Track>
                <Avatar $size={135} $text={43}>
                  28
                  <VoiceMic>
                    <MicSolidIcon color="#52a5ff" width={40} outline="#242625" />
                  </VoiceMic>
                </Avatar>
              </Voice>
              <CornerTime $bottom={20}>14:41</CornerTime>
            </Bubble>
            <SideSpace />
          </MessageRow>

          <SystemNotice type="button">
            <TimerIcon size={44} />
            The message timer was updated. New
            <br />
            messages will disappear from this chat 24
            <br />
            hours after they're sent, except when
            <br />
            kept. Tap to change.
          </SystemNotice>

          <UnreadBand>1 unread message</UnreadBand>

          <MessageRow $gap={40}>
            <Bubble $wide>
              <Tail />
              <Preview>
                <PreviewTitle>global.directcorelogistic.online</PreviewTitle>
                <PreviewText $size={45}>https://global.directcorelogistic.online/</PreviewText>
                <PreviewText $size={42}>global.directcorelogistic.online</PreviewText>
              </Preview>
              <Body>
                <a href="https://global.directcorelogistic.online/">
                  https://
                  <br />
                  global.directcorelogistic.online/
                </a>
                {"\n\n\nwebsite login :\n\nuser name : admin\npassword : admin123\n\n\nemail :\n"}
                <a href="mailto:global@directcorelogistic.online">global@directcorelogistic.online</a>
                {"\n\npassword : Dsng7934*"}
              </Body>
              <CornerTime $bottom={14}>15:19</CornerTime>
            </Bubble>
            <ForwardButton type="button" aria-label="Forward">
              <ForwardIcon />
            </ForwardButton>
          </MessageRow>

          <ScrollThumb />
        </Chat>

        <Footer>
          <Composer>
            <button type="button" aria-label="Attach">
              <PlusIcon />
            </button>
            <Field>
              <FieldInput type="text" aria-label="Message" />
              <button type="button" aria-label="Stickers">
                <StickerIcon />
              </button>
            </Field>
            <button type="button" aria-label="Camera">
              <CameraIcon />
            </button>
            <MicButton type="button" aria-label="Record voice message">
              <MicIcon />
            </MicButton>
          </Composer>
          <HomeIndicator />
        </Footer>
      </Screen>
    </>
  );
}
